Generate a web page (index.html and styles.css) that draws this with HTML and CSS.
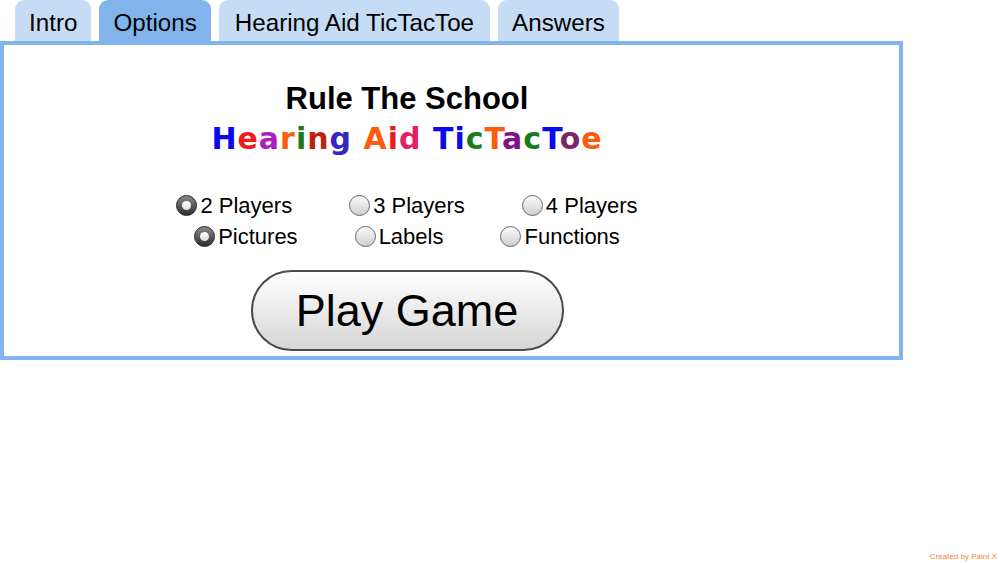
FILE: index.html
```html
<!DOCTYPE html>
<html lang="en">
<head>
  <meta charset="UTF-8">
  <title>Rule The School - Options</title>
  <link rel="stylesheet" href="styles.css">
</head>
<body>
  <div class="tabs">
    <div class="tab">Intro</div>
    <div class="tab active">Options</div>
    <div class="tab wide">Hearing Aid TicTacToe</div>
    <div class="tab">Answers</div>
  </div>

  <div class="panel">
    <div class="content">
      <h1>Rule The School</h1>
      <h2 class="rainbow">
        <span class="c-blue">H</span><span class="c-red">e</span><span class="c-purple">a</span><span class="c-orange">r</span><span class="c-green">i</span><span class="c-darkred">n</span><span class="c-indigo">g</span>
        <span class="c-orange">A</span><span class="c-red">i</span><span class="c-pink">d</span>
        <span class="c-blue">T</span><span class="c-blue">i</span><span class="c-green">c</span><span class="c-orange">T</span><span class="c-purple2">a</span><span class="c-green">c</span><span class="c-blue">T</span><span class="c-maroon">o</span><span class="c-orange">e</span>
      </h2>

      <div class="choices">
        <label class="choice"><span class="radio on"></span>2 Players</label>
        <label class="choice"><span class="radio"></span>3 Players</label>
        <label class="choice"><span class="radio"></span>4 Players</label>
      </div>
      <div class="choices">
        <label class="choice"><span class="radio on"></span>Pictures</label>
        <label class="choice"><span class="radio"></span>Labels</label>
        <label class="choice"><span class="radio"></span>Functions</label>
      </div>

      <button class="play">Play Game</button>
    </div>
  </div>

  <div class="credit">Created by Paint X</div>
</body>
</html>
```

FILE: styles.css
```css
body {
  margin: 0;
  height: 563px;
  display: flex;
  flex-direction: column;
  font-family: 'Liberation Sans', Arial, sans-serif;
  background: #fff;
  color: #000;
}
.tabs {
  display: flex;
  gap: 8px;
  margin-left: 15px;
  height: 41px;
}
.tab {
  background: #c6dcf4;
  border-radius: 9px 9px 0 0;
  padding: 0 14px;
  font-size: 24.2px;
  line-height: 46px;
}
.tab.active {
  background: #82b4ec;
}
.tab.wide {
  padding: 0 16px;
}
.panel {
  width: 903px;
  height: 319px;
  box-sizing: border-box;
  border: 4px solid #82b4ec;
}
.content {
  width: 806px;
  text-align: center;
  padding-top: 36px;
}
h1 {
  margin: 0;
  font-size: 31px;
  line-height: 36px;
  font-weight: bold;
}
.rainbow {
  margin: 4px 0 0;
  font-family: 'DejaVu Sans', Verdana, sans-serif;
  font-size: 30px;
  letter-spacing: 1px;
  line-height: 36px;
  font-weight: bold;
}
.c-blue { color: #0a0aee; }
.c-red { color: #ee1c1c; }
.c-purple { color: #b01cc0; }
.c-orange { color: #fc5c0c; }
.c-green { color: #1a7a1a; }
.c-darkred { color: #c02010; }
.c-indigo { color: #3428c0; }
.c-pink { color: #e81c64; }
.c-purple2 { color: #82108c; }
.c-maroon { color: #7c2464; }
.choices {
  display: flex;
  justify-content: center;
  gap: 57px;
  font-size: 22px;
  line-height: 31px;
}
.rainbow + .choices {
  margin-top: 33px;
}
.choice {
  display: flex;
  align-items: center;
}
.radio {
  width: 19px;
  height: 19px;
  border-radius: 50%;
  border: 1px solid #666;
  background: linear-gradient(#fbfbfb, #cfcfcf);
  margin-right: 3px;
  position: relative;
}
.radio.on {
  border-color: #222;
  background: linear-gradient(#8a8a8a, #2e2e2e);
}
.radio.on::after {
  content: '';
  position: absolute;
  left: 5px;
  top: 5px;
  width: 9px;
  height: 9px;
  border-radius: 50%;
  background: linear-gradient(#fff, #ddd);
}
.play {
  display: block;
  margin: 18px auto 0;
  width: 313px;
  height: 81px;
  border-radius: 41px;
  border: 2px solid #4a4a4a;
  background: linear-gradient(#ffffff, #d6d6d6);
  font-family: 'Liberation Sans', Arial, sans-serif;
  font-size: 45px;
  color: #000;
  padding: 0;
}
.credit {
  margin-top: auto;
  align-self: flex-end;
  margin-right: 3px;
  margin-bottom: 2px;
  font-size: 8px;
  color: #f4843c;
}
```
